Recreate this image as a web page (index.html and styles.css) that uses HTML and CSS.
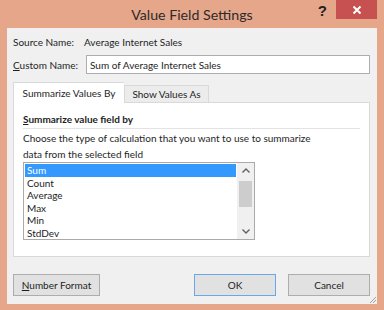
FILE: index.html
```html
<!DOCTYPE html>
<html>
<head>
    <title>Value Field Settings</title>
    <link rel="stylesheet" href="styles.css">
</head>
<body>
    <div class="window">
        <div class="titlebar">
            <div></div>
            <div class="title">Value Field Settings</div>
            <div class="controls">
                <span class="help">?</span>
                <button class="close">
                    <svg width="10" height="10" viewBox="0 0 10 10"><path d="M1.5 1.5 L8.5 8.5 M8.5 1.5 L1.5 8.5" stroke="#fff" stroke-width="2"/></svg>
                </button>
            </div>
        </div>
        <div class="dialog">
            <div class="row">
                <span class="label">Source Name:</span>
                <span>Average Internet Sales</span>
            </div>
            <div class="row custom">
                <label class="label" for="customName"><u>C</u>ustom Name:</label>
                <input type="text" id="customName" value="Sum of Average Internet Sales">
            </div>

            <div class="tabs">
                <div class="tab active">Summarize Values By</div>
                <div class="tab">Show Values As</div>
            </div>
            <div class="panel">
                <div class="heading"><u>S</u>ummarize value field by</div>
                <p class="hint">Choose the type of calculation that you want to use to summarize<br>data from the selected field</p>
                <div class="listbox">
                    <ul class="items">
                        <li class="selected">Sum</li>
                        <li>Count</li>
                        <li>Average</li>
                        <li>Max</li>
                        <li>Min</li>
                        <li>StdDev</li>
                    </ul>
                    <div class="scrollbar">
                        <svg width="16" height="16" viewBox="0 0 16 16"><path d="M4.5 9.5 L8 6 L11.5 9.5" fill="none" stroke="#606060" stroke-width="1.4"/></svg>
                        <div class="thumb"></div>
                        <div class="track"></div>
                        <svg width="16" height="16" viewBox="0 0 16 16"><path d="M4.5 6.5 L8 10 L11.5 6.5" fill="none" stroke="#606060" stroke-width="1.4"/></svg>
                    </div>
                </div>
            </div>

            <div class="buttons">
                <button class="btn"><u>N</u>umber Format</button>
                <div class="spacer"></div>
                <button class="btn default">OK</button>
                <button class="btn">Cancel</button>
            </div>
            <svg class="grip" width="8" height="8" viewBox="0 0 8 8"><path d="M7 1 L1 7 M7 4 L4 7 M7 7 L7 7" stroke="#a0a0a0" stroke-width="1"/></svg>
        </div>
    </div>
</body>
</html>
```

FILE: styles.css
```css
body {
    margin: 0;
    font-family: Lato, "Liberation Sans", sans-serif;
    font-size: 10px;
    color: #1e1e1e;
}
.window {
    width: 384px;
    height: 310px;
    box-sizing: border-box;
    background-color: #e6a689;
    padding: 0 7px 6px;
}
.titlebar {
    height: 28px;
    display: grid;
    grid-template-columns: 1fr auto 1fr;
}
.title {
    font-size: 14.2px;
    color: #2b2b2b;
    line-height: 30px;
    white-space: nowrap;
}
.controls {
    display: flex;
    justify-content: flex-end;
    align-items: flex-start;
}
.help {
    font-family: "Liberation Sans", sans-serif;
    font-size: 15px;
    font-weight: bold;
    color: #222;
    line-height: 22px;
    margin-right: 9px;
}
.close {
    width: 41px;
    height: 19px;
    border: none;
    padding: 0;
    background-color: #c75050;
    display: flex;
    align-items: center;
    justify-content: center;
}
.dialog {
    height: 276px;
    background-color: #f0f0f0;
    box-sizing: border-box;
    padding: 7px 7px 8px 6px;
    position: relative;
}
.row {
    display: flex;
    align-items: center;
    height: 14px;
    white-space: nowrap;
}
.label {
    width: 71px;
    flex-shrink: 0;
}
.custom {
    height: 19px;
    margin-top: 6px;
}
.custom input {
    flex: 1;
    height: 19px;
    box-sizing: border-box;
    margin: 0 0 0 2px;
    border: 1px solid #abadb3;
    padding: 0 3px;
    font: inherit;
    color: #1e1e1e;
}
.tabs {
    display: flex;
    align-items: flex-end;
    margin-top: 8px;
    height: 20px;
}
.tab {
    height: 17px;
    line-height: 17px;
    border: 1px solid #d9d9d9;
    border-bottom: none;
    background-color: #ececec;
    box-sizing: border-box;
    width: 85px;
    text-align: center;
    white-space: nowrap;
}
.tab.active {
    height: 21px;
    line-height: 20px;
    width: 111px;
    background-color: #fff;
    border-right: none;
    margin-bottom: -1px;
}
.panel {
    height: 155px;
    box-sizing: border-box;
    border: 1px solid #d9d9d9;
    background-color: #fff;
    padding: 9px 9px 0 9px;
}
.heading {
    font-weight: bold;
    line-height: 14px;
    padding-bottom: 2px;
    border-bottom: 1px solid #e3e3e3;
}
.hint {
    margin: 1px 0 0;
    line-height: 16px;
    white-space: nowrap;
}
.listbox {
    width: 232px;
    height: 78px;
    box-sizing: border-box;
    border: 1px solid #aaaaaa;
    display: flex;
}
.items {
    list-style: none;
    margin: 0;
    padding: 1px 1px 0;
    flex: 1;
}
.items li {
    line-height: 12.5px;
    padding: 0 2px;
}
.items li.selected {
    background-color: #3399ff;
    color: #fff;
}
.scrollbar {
    width: 17px;
    background-color: #f0f0f0;
    display: flex;
    flex-direction: column;
    align-items: center;
}
.thumb {
    width: 13px;
    height: 26px;
    margin-top: 2px;
    background-color: #cdcdcd;
}
.track {
    flex: 1;
}
.buttons {
    display: flex;
    margin-top: 17px;
    gap: 12px;
}
.spacer {
    flex: 1;
}
.btn {
    height: 22px;
    width: 82px;
    border: 1px solid #adadad;
    background-color: #e1e1e1;
    font: inherit;
    color: #1e1e1e;
    padding: 0;
}
.btn:first-child {
    width: 87px;
}
.btn.default {
    border-color: #6aa9e9;
}
.grip {
    position: absolute;
    right: 0;
    bottom: 0;
}
```
